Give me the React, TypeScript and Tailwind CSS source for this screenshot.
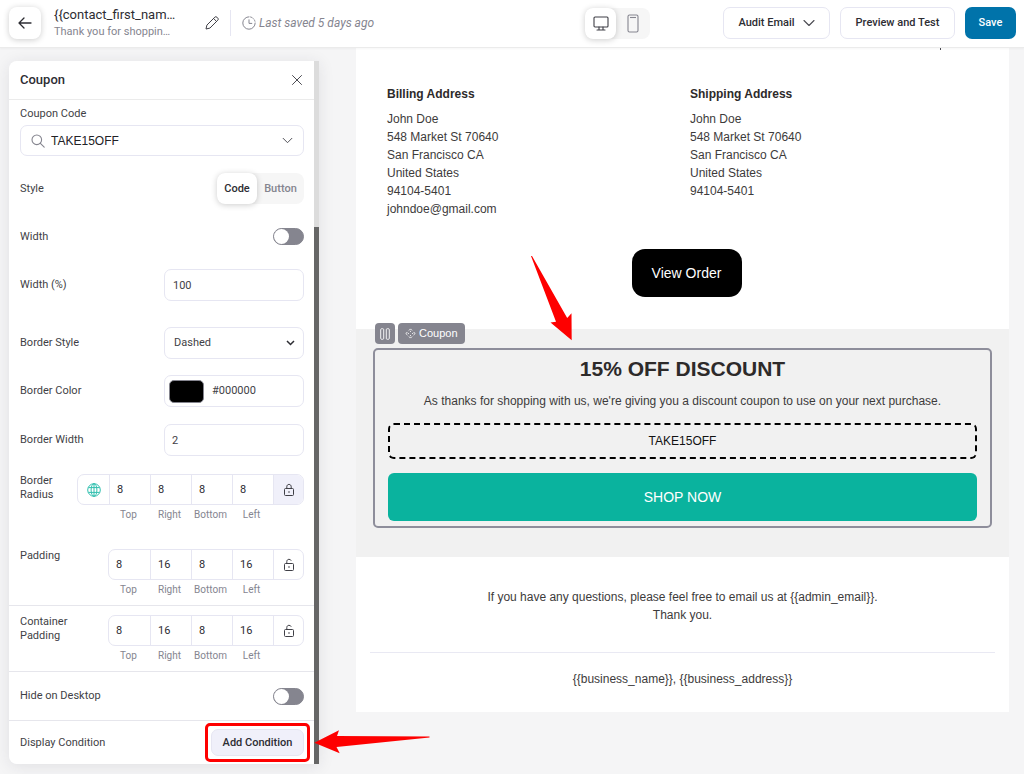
import { useState, type ReactNode } from "react";

const fieldBorder = "border border-[#e6e6f2] rounded-[7px] bg-white";

function ChevronThin({ className }: { className: string }) {
  return (
    <svg viewBox="0 0 12 8" className={className} fill="none" stroke="#4b4b52" strokeWidth="1.1" strokeLinecap="round" strokeLinejoin="round" aria-hidden="true">
      <path d="M1 1.5 6 6.5l5-5" />
    </svg>
  );
}

function GlobeIcon() {
  return (
    <svg viewBox="0 0 14 14" className="size-[14px]" fill="none" stroke="#2fbfae" strokeWidth="1" aria-hidden="true">
      <circle cx="7" cy="7" r="6.3" />
      <ellipse cx="7" cy="7" rx="2.9" ry="6.3" />
      <path d="M7 .7v12.6M1.4 4.6h11.2M1.4 9.4h11.2" />
    </svg>
  );
}

function LockIcon({ open }: { open?: boolean }) {
  return (
    <svg viewBox="0 0 12 14" className="h-[14px] w-[12px]" fill="none" stroke="#3f3f46" strokeWidth="1" strokeLinejoin="round" aria-hidden="true">
      <rect x="1.5" y="5.5" width="9" height="7" rx="1" />
      <path d={open ? "M3.8 5.500V3.600C3.800 2.200 4.700 1.300 6 1.300c1.100 0 1.900.6 2.200 1.400" : "M3.800 5.500V3.800C3.800 2.300 4.700 1.400 6 1.400s2.200.9 2.200 2.400V5.500"} />
      <circle cx="6" cy="9" r=".8" fill="#3f3f46" stroke="none" />
    </svg>
  );
}

function Row({ label, htmlFor, className, children }: { label: string; htmlFor?: string; className: string; children: ReactNode }) {
  return (
    <div className={`flex items-center justify-between ${className}`}>
      <label htmlFor={htmlFor}>{label}</label>
      {children}
    </div>
  );
}

function Toggle({ id }: { id: string }) {
  return (
    <input
      id={id}
      type="checkbox"
      role="switch"
      className="h-[17px] w-[31px] appearance-none rounded-full border border-[#85858f] bg-[#85858f] before:block before:size-[15px] before:rounded-full before:bg-white checked:bg-[#0073aa] checked:before:translate-x-[14px]"
    />
  );
}

function Sides({ label, values, globe, locked }: { label: string; values: string[]; globe?: boolean; locked?: boolean }) {
  const names = ["Top", "Right", "Bottom", "Left"];
  return (
    <div className="flex items-start justify-between" role="group" aria-label={label}>
      <span className="w-[56px] leading-[14px]">{label}</span>
      <div className="flex flex-col items-end">
        <div className={`flex h-[31px] overflow-hidden ${fieldBorder}`}>
          {globe && (
            <button type="button" aria-label="Global value" className="grid w-[31px] place-items-center">
              <GlobeIcon />
            </button>
          )}
          {names.map((n, i) => (
            <input
              key={n}
              aria-label={`${label} ${n}`}
              defaultValue={values[i]}
              className={`w-[41px] border-[#e6e6f2] px-[7px] text-[#2d2d33] outline-none ${i > 0 || globe ? "border-l" : ""}`}
            />
          ))}
          <button
            type="button"
            aria-label={locked ? "Unlink sides" : "Link sides"}
            className={`grid w-[30px] place-items-center border-l border-[#e6e6f2] ${locked ? "bg-[#f0f0fa]" : ""}`}
          >
            <LockIcon open={!locked} />
          </button>
        </div>
        <div className="mt-[3px] flex pr-[32px] text-[10px] leading-[13px] text-[#85858f]">
          {names.map((n) => (
            <span key={n} className="w-[41px] text-center">{n}</span>
          ))}
        </div>
      </div>
    </div>
  );
}

function Header() {
  return (
    <header className="relative z-10 flex h-[48px] items-center border-b border-[#ebebeb] bg-white pr-2 pl-[9px] pb-px shadow-[0_1px_2px_rgba(0,0,0,0.04)]">
      <button type="button" aria-label="Back" className="grid size-8 shrink-0 place-items-center rounded-lg bg-white shadow-[0_1px_6px_rgba(0,0,0,0.2)]">
        <svg viewBox="0 0 14 12" className="h-[12px] w-[14px]" fill="none" stroke="#2d2d33" strokeWidth="1.3" strokeLinecap="round" strokeLinejoin="round" aria-hidden="true">
          <path d="M13 6H1.2M6 1 1 6l5 5" />
        </svg>
      </button>
      <div className="ml-[13px] w-[140px] text-[#2d2d33]">
        <h1 className="text-[13px] leading-[18px]">{"{{contact_first_nam…"}</h1>
        <p className="text-[11px] leading-[16px] text-[#85858f]">Thank you for shoppin…</p>
      </div>
      <button type="button" aria-label="Rename" className="ml-[11px]">
        <svg viewBox="0 0 14 14" className="size-[14px]" fill="none" stroke="#3f3f46" strokeWidth="1" strokeLinejoin="round" aria-hidden="true">
          <path d="M1 13l.9-3.900L9.800 1.200a1.500 1.500 0 0 1 2.100 0l.9.9a1.500 1.500 0 0 1 0 2.100L4.900 12.100 1 13ZM8.600 2.500l2.900 2.900" />
        </svg>
      </button>
      <span className="ml-[11px] h-[26px] w-px bg-[#e6e6f2]" />
      <div className="ml-[11px] flex items-center gap-[3px] text-[12px] text-[#85858f] italic">
        <svg viewBox="0 0 14 14" className="size-[14px]" fill="none" stroke="currentColor" strokeWidth="1" strokeLinecap="round" aria-hidden="true">
          <path d="M7 .8a6.200 6.200 0 1 0 6.200 6.200" />
          <path d="M8.600 1a6.200 6.200 0 0 1 4.500 5" strokeDasharray="1.2 1.3" />
          <path d="M7 3.800V7.400h2.800" />
        </svg>
        Last saved 5 days ago
      </div>
      <div className="mr-[73px] ml-auto flex rounded-lg bg-[#f6f6f6]">
        <button type="button" aria-label="Desktop view" className="grid h-[31px] w-[31px] place-items-center rounded-lg bg-white shadow-[0_1px_6px_rgba(0,0,0,0.2)]">
          <svg viewBox="0 0 16 15" className="h-[15px] w-[16px]" fill="none" stroke="#3f3f46" strokeWidth="1.1" strokeLinecap="round" aria-hidden="true">
            <rect x="1" y="1" width="14" height="10" rx="1" />
            <path d="M6 11v2.800M10 11v2.800M4 14h8" />
          </svg>
        </button>
        <button type="button" aria-label="Mobile view" className="grid h-[31px] w-[34px] place-items-center">
          <svg viewBox="0 0 12 19" className="h-[19px] w-[12px]" fill="none" stroke="#85858f" strokeWidth="1.1" aria-hidden="true">
            <rect x="1" y="1" width="10" height="17" rx="1.5" />
            <path d="M3 3.500h6" />
          </svg>
        </button>
      </div>
      <div className="flex gap-[10px] text-[11px] font-medium text-[#2d2d33]">
        <button type="button" className={`flex h-8 w-[107px] items-center justify-center gap-2 ${fieldBorder}`}>
          Audit Email
          <ChevronThin className="h-[8px] w-[12px]" />
        </button>
        <button type="button" className={`h-8 w-[115px] ${fieldBorder}`}>Preview and Test</button>
        <button type="button" className="h-8 w-[51px] rounded-[7px] bg-[#0073aa] text-white">Save</button>
      </div>
    </header>
  );
}

function SettingsPanel() {
  const [mode, setMode] = useState("Code");
  const modeClass = (m: string) =>
    m === mode ? "rounded-lg bg-white text-[#2d2d33] shadow-[0_1px_6px_rgba(0,0,0,0.2)]" : "text-[#85858f]";
  return (
    <aside className="flex w-[310px] shrink-0 self-start rounded-l-lg text-[11px] leading-[16px] text-[#3f3f46] shadow-[0_2px_16px_rgba(40,40,60,0.1)]">
      <div className="flex-1 rounded-l-lg bg-white">
        <div className="flex h-[39px] items-center justify-between border-b border-[#ebebeb] pr-[11px] pl-[11px]">
          <h2 className="text-[13px] font-medium text-[#2d2d33]">Coupon</h2>
          <button type="button" aria-label="Close">
            <svg viewBox="0 0 12 12" className="size-[12px]" stroke="#4b4b52" strokeWidth="1" strokeLinecap="round" aria-hidden="true">
              <path d="M1.500 1.500l9 9M10.500 1.500l-9 9" />
            </svg>
          </button>
        </div>
        <div className="border-b border-[#e6e6ec] pt-[6px] pr-[10px] pb-[9px] pl-[11px]">
          <label htmlFor="coupon-code" className="block">Coupon Code</label>
          <div className={`mt-[3px] flex h-[31px] items-center pl-[10px] ${fieldBorder}`}>
            <svg viewBox="0 0 14 14" className="size-[14px] shrink-0" fill="none" stroke="#85858f" strokeWidth="1.1" strokeLinecap="round" aria-hidden="true">
              <circle cx="5.8" cy="5.8" r="4.8" />
              <path d="M9.400 9.400l3.800 3.800" />
            </svg>
            <select id="coupon-code" className="ml-[6px] flex-1 appearance-none bg-transparent font-['Liberation_Sans',sans-serif] text-[12px] text-[#222226] outline-none">
              <option>TAKE15OFF</option>
            </select>
            <ChevronThin className="mr-[10px] h-[7px] w-[11px]" />
          </div>
          <div className="mt-[17px] flex items-center justify-between">
            <span>Style</span>
            <div className="flex rounded-lg bg-[#f6f6f6] font-medium">
              <button type="button" onClick={() => setMode("Code")} className={`h-[31px] w-[40px] ${modeClass("Code")}`}>Code</button>
              <button type="button" onClick={() => setMode("Button")} className={`h-[31px] w-[47px] ${modeClass("Button")}`}>Button</button>
            </div>
          </div>
          <Row label="Width" htmlFor="width-auto" className="mt-6 h-[17px]">
            <Toggle id="width-auto" />
          </Row>
          <Row label="Width (%)" htmlFor="width-percent" className="mt-6">
            <input id="width-percent" defaultValue="100" className={`h-8 w-[140px] px-2 outline-none ${fieldBorder}`} />
          </Row>
          <Row label="Border Style" htmlFor="border-style" className="mt-[26px]">
            <div className={`flex h-8 w-[140px] items-center pr-[8px] pl-[9px] ${fieldBorder}`}>
              <select id="border-style" className="flex-1 appearance-none bg-transparent outline-none">
                <option>Dashed</option>
                <option>Solid</option>
                <option>Dotted</option>
              </select>
              <svg viewBox="0 0 9 6" className="h-[6px] w-[9px]" fill="none" stroke="#2d2d33" strokeWidth="1.5" aria-hidden="true">
                <path d="M1 1l3.500 3.500L8 1" />
              </svg>
            </div>
          </Row>
          <Row label="Border Color" htmlFor="border-color" className="mt-4">
            <div className={`flex h-8 w-[140px] items-center pl-1 ${fieldBorder}`}>
              <button type="button" aria-label="Pick border color" className="h-[23px] w-[35px] shrink-0 rounded-[5px] border border-[#85858f] bg-black" />
              <input id="border-color" defaultValue="#000000" className="ml-2 w-[80px] outline-none" />
            </div>
          </Row>
          <Row label="Border Width" htmlFor="border-width" className="mt-[17px] mb-[18px]">
            <input id="border-width" defaultValue="2" className={`h-8 w-[140px] px-[7px] outline-none ${fieldBorder}`} />
          </Row>
          <div className="flex flex-col gap-[28px]">
            <Sides label="Border Radius" values={["8", "8", "8", "8"]} globe locked />
            <Sides label="Padding" values={["8", "16", "8", "16"]} />
          </div>
        </div>
        <div className="border-b border-[#e6e6ec] py-[9px] pr-[10px] pl-[11px]">
          <Sides label="Container Padding" values={["8", "16", "8", "16"]} />
        </div>
        <Row label="Hide on Desktop" htmlFor="hide-desktop" className="h-[49px] border-b border-[#e6e6ec] pr-[10px] pl-[11px]">
          <Toggle id="hide-desktop" />
        </Row>
        <div className="flex h-[43px] items-center justify-between pr-[10px] pl-[11px]">
          <span>Display Condition</span>
          <div className="relative">
            <button type="button" className="block h-[27px] w-[93px] rounded-[7px] border border-[#e6e6f2] bg-[#f0f0fa] font-medium text-[#2d2d33]">Add Condition</button>
            <span className="pointer-events-none absolute -inset-[6px] rounded-[5px] border-3 border-[#fe0000]" />
          </div>
        </div>
      </div>
      <div className="flex w-[5px] flex-col bg-[#dcdcdc]">
        <div className="mt-[166px] flex-1 bg-[#666666]" />
      </div>
    </aside>
  );
}

function Address({ title, lines }: { title: string; lines: string[] }) {
  return (
    <div>
      <h3 className="mb-[7px] font-bold text-[#2d2a2a]">{title}</h3>
      {lines.map((l) => (
        <p key={l}>{l}</p>
      ))}
    </div>
  );
}

function EmailPreview() {
  return (
    <main className="relative mr-[15px] ml-[37px] min-w-0 flex-1 self-start bg-white font-['Liberation_Sans',Arial,sans-serif] text-[12px] leading-[18px] text-[#3d3b3b]">
      <span className="absolute top-0 right-[68px] h-[2px] w-px bg-[#4b4b52]" />
      <div className="grid grid-cols-2 pt-[37px] pr-[16px] pl-[31px]">
        <Address title="Billing Address" lines={["John Doe", "548 Market St 70640", "San Francisco CA", "United States", "94104-5401", "johndoe@gmail.com"]} />
        <Address title="Shipping Address" lines={["John Doe", "548 Market St 70640", "San Francisco CA", "United States", "94104-5401"]} />
      </div>
      <div className="flex justify-center pt-[31px] pb-8 pl-2">
        <a href="#order" className="grid h-[48px] w-[110px] place-items-center rounded-[13px] bg-black text-[14px] text-white">View Order</a>
      </div>
      <section className="relative bg-[#f1f1f1] px-[17px] pt-[19px] pb-[29px]">
        <div className="absolute -top-[6px] left-[19px] flex gap-[3px] text-white">
          <button type="button" aria-label="Select columns" className="grid h-[21px] w-[20px] place-items-center rounded bg-[#85858f]">
            <svg viewBox="0 0 10 12" className="h-[12px] w-[10px]" fill="none" stroke="currentColor" strokeWidth=".9" aria-hidden="true">
              <rect x=".7" y=".7" width="3" height="10.6" rx="1" />
              <rect x="6.3" y=".7" width="3" height="10.6" rx="1" />
            </svg>
          </button>
          <button type="button" className="flex h-[21px] items-center gap-[3px] rounded bg-[#85858f] px-[7px] pb-px text-[11px]">
            <svg viewBox="0 0 12 12" className="size-[11px]" fill="none" stroke="currentColor" strokeWidth="1" strokeLinecap="round" strokeLinejoin="round" aria-hidden="true">
              <path d="M4.600 2.400 6 1l1.400 1.400M4.600 9.600 6 11l1.400-1.400M2.400 4.600 1 6l1.400 1.400M9.600 4.600 11 6 9.600 7.400M6 3.600v.2M6 8.200v.2M3.600 6h.2M8.200 6h.2" />
            </svg>
            Coupon
          </button>
        </div>
        <div className="rounded-[5px] border-2 border-[#8e8e9b] px-[13px] pt-[6px] pb-[5px] text-center">
          <h2 className="text-[21px] leading-[26px] font-bold text-[#2d2a2a]">15% OFF DISCOUNT</h2>
          <p className="mt-[10px]">As thanks for shopping with us, we're giving you a discount coupon to use on your next purchase.</p>
          <div className="mt-[13px] grid h-[36px] place-items-center rounded-[6px] border-2 border-dashed border-black text-[12px] text-[#111111]">TAKE15OFF</div>
          <a href="#shop" className="mt-[14px] grid h-[48px] place-items-center rounded-[6px] bg-[#0ab39e] pb-px text-[14px] text-white">SHOP NOW</a>
        </div>
      </section>
      <footer className="px-[14px] pt-[31px] pb-[24px] text-center">
        <p>
          {"If you have any questions, please feel free to email us at {{admin_email}}."}
          <br />
          Thank you.
        </p>
        <hr className="mt-[28px] border-t-1 border-[#e9e9f3]" />
        <p className="mt-[17px]">{"{{business_name}}, {{business_address}}"}</p>
      </footer>
    </main>
  );
}

export default function App() {
  return (
    <div className="relative min-h-screen overflow-hidden bg-[#f5f5f6] font-[Roboto,sans-serif]">
      <Header />
      <div className="flex pl-[9px]">
        <div className="flex pt-[13px] pb-[9px]">
          <SettingsPanel />
        </div>
        <EmailPreview />
      </div>
      <svg viewBox="0 0 42 85" className="pointer-events-none absolute top-[256px] left-[531px] h-[85px] w-[42px]" fill="#fe0000" aria-hidden="true">
        <path d="M0 0 1 0 36.200 62 40.500 57.200 40.700 84.200 19.500 66.500 25 65.800Z" />
      </svg>
      <svg viewBox="0 0 116 24" className="pointer-events-none absolute top-[730px] left-[314px] h-[24px] w-[116px]" fill="#fe0000" aria-hidden="true">
        <path d="M115.500 6.500 115.500 7.500 22.500 17 25.700 23.200.3 12.700 25 .3 23 6Z" />
      </svg>
    </div>
  );
}
